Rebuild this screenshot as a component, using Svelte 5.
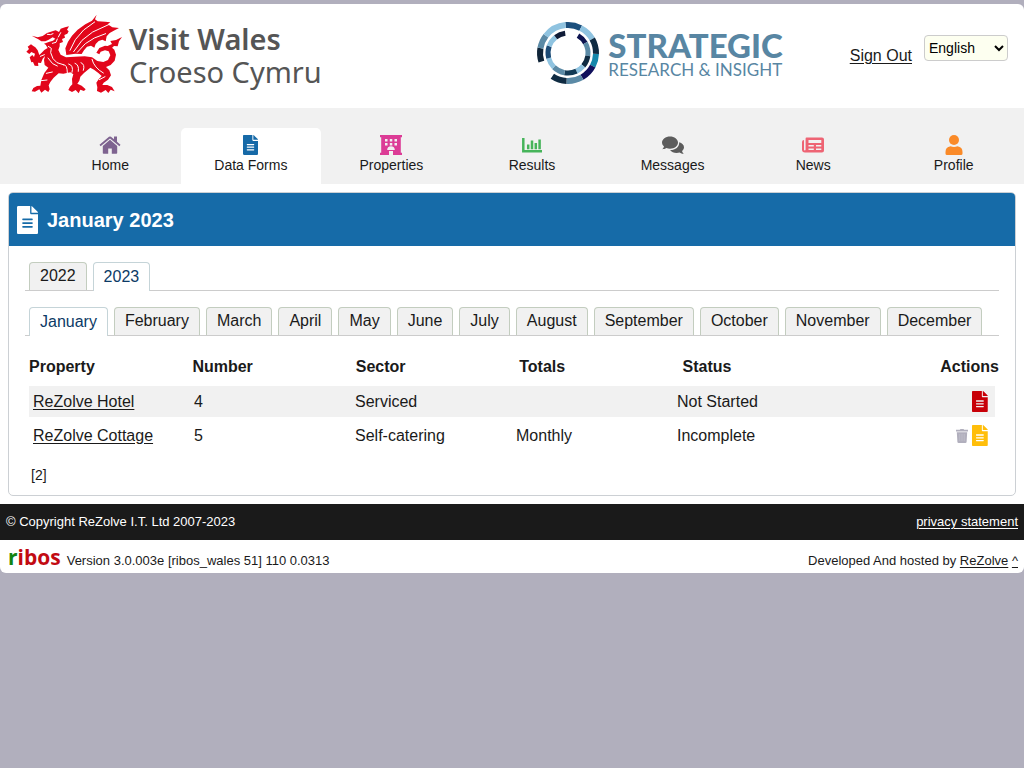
<script>
  const nav = [
    { id: 'home', label: 'Home', color: '#7e6390' },
    { id: 'forms', label: 'Data Forms', color: '#1669a7' },
    { id: 'properties', label: 'Properties', color: '#dc3c96' },
    { id: 'results', label: 'Results', color: '#46b45a' },
    { id: 'messages', label: 'Messages', color: '#5c5c5c' },
    { id: 'news', label: 'News', color: '#ee6474' },
    { id: 'profile', label: 'Profile', color: '#fa8a28' }
  ];
  const years = ['2022', '2023'];
  const months = ['January', 'February', 'March', 'April', 'May', 'June', 'July', 'August', 'September', 'October', 'November', 'December'];
  const rows = [
    { name: 'ReZolve Hotel', number: 4, sector: 'Serviced', totals: '', status: 'Not Started', color: '#c80008', removable: false },
    { name: 'ReZolve Cottage', number: 5, sector: 'Self-catering', totals: 'Monthly', status: 'Incomplete', color: '#ffbe0a', removable: true }
  ];

  let page = $state('forms');
  let year = $state('2023');
  let month = $state('January');

  const outer = ['#1b4f7d', '#8fc3e0', '#0f2b42', '#1587ab', '#10105c', '#5b8aa6', '#0f2b42', null, '#0f2438', '#5b8aa6', '#8fc3e0'];
  const outerAngles = [-5, 27, 60, 92, 118, 150, 183, 214, 252, 280, 308, 355];
  const inner = ['#0d1450', '#5b8aa6', '#0f2b42', '#8fc3e0', '#123a55', '#5b8aa6', '#8fc3e0', '#1b4a75', '#8fc3e0', '#0f1c38'];
  const innerAngles = [30, 60, 98, 130, 155, 190, 225, 255, 290, 322, 352];

  function arc(radius, from, to) {
    const point = (deg) => {
      const a = (deg * Math.PI) / 180;
      return `${(32 + radius * Math.sin(a)).toFixed(2)} ${(32 - radius * Math.cos(a)).toFixed(2)}`;
    };
    return `M${point(from)}A${radius} ${radius} 0 0 1 ${point(to)}`;
  }
</script>

{#snippet fileIcon()}
  <svg class="file" viewBox="0 0 384 512" aria-hidden="true">
    <path fill="currentColor" fill-rule="evenodd" d="M240 128V0H24C11 0 0 11 0 24v464c0 13 11 24 24 24h336c13 0 24-11 24-24V152H264c-13 0-24-11-24-24zm48 256c0 7-5 12-12 12H108c-7 0-12-5-12-12v-8c0-7 5-12 12-12h168c7 0 12 5 12 12zm0-68c0 7-5 12-12 12H108c-7 0-12-5-12-12v-8c0-7 5-12 12-12h168c7 0 12 5 12 12zm0-76v8c0 7-5 12-12 12H108c-7 0-12-5-12-12v-8c0-7 5-12 12-12h168c7 0 12 5 12 12zm96-118H264V0q8 0 15 7l98 98c4 5 7 11 7 17z" />
  </svg>
{/snippet}

<div class="sheet">
  <header class="masthead">
    <div class="brand">
      <svg class="dragon" viewBox="30 42 294 243" aria-hidden="true">
        <g fill="#e2061b">
          <path d="M50 107L68 112L83 108L96 99L112 94L122 91L132 96L137 86L150 82L162 79L156 89L161 94L157 101L148 105L150 113L141 117L144 126L134 130L134 139L130 150L137 164L153 172L180 170L209 169L231 172L247 183L265 186L279 180L286 166L281 154L270 151L257 155L253 163L244 158L253 144L270 137L286 139L298 149L303 164L299 182L287 195L273 201L283 211L288 226L279 239L266 248L262 255L277 255L291 261L299 274L287 269L280 279L272 270L258 278L246 273L247 262L244 248L251 238L260 228L250 219L237 209L226 203L207 219L196 230L193 242L187 251L200 257L212 268L207 273L196 269L191 280L182 270L171 276L160 270L165 260L172 253L171 237L175 223L166 217L145 221L131 220L116 233L106 246L101 256L104 268L100 276L90 269L79 278L73 268L60 275L50 274L55 264L66 258L76 257L79 240L88 219L100 203L89 195L87 180L90 168L83 176L78 189L69 188L70 198L59 197L54 186L49 187L44 172L52 165L57 171L60 161L49 156L43 162L34 155L42 147L38 140L48 133L55 138L61 142L68 151L73 165L80 158L88 150L98 144L92 134L87 131L101 126L114 122L121 116L113 112L101 119L91 124L79 124L70 118Z" />
          <path d="M154 165L151 145L159 125L171 107L188 89L211 73L231 62L245 44L240 58L248 64L271 65L286 67L278 73L292 82L312 84L299 91L284 99L275 109L272 124L262 119L251 123L242 132L238 143L228 137L216 140L207 151L200 162L181 161Z" />
          <path d="M276 139L291 132L286 123L303 120L321 111L312 124L308 139L297 138L290 145Z" />
        </g>
        <g fill="none" stroke="#fff" stroke-width="3" stroke-linecap="round">
          <path d="M165 151L181 119L206 90L239 66" />
          <path d="M176 155L201 121L233 96L283 73" />
          <path d="M187 157L211 131L238 114L272 101" />
          <path d="M100 139L109 145L107 158L114 176L126 188L145 194" />
          <path d="M112 130L123 127L127 117" />
          <path d="M99 174L113 191L127 198" />
          <path d="M145 194Q157 193 157 218M161 192Q177 196 171 217M180 190Q193 194 190 214M198 188Q211 193 205 211" />
          <path d="M231 178Q237 203 265 219M253 239L270 230M94 220L112 216M78 242L96 240" />
          <path d="M97 103L106 104L114 101M137 98L130 111M76 169L88 164" />
        </g>
      </svg>
      <div class="brand-text"><strong>Visit Wales</strong><span>Croeso Cymru</span></div>
    </div>

    <div class="partner">
      <svg class="rings" viewBox="0 0 64 64" aria-hidden="true">
        <g fill="none">
          {#each outer as color, i}
            {#if color}<path d={arc(28, outerAngles[i], outerAngles[i + 1])} stroke={color} stroke-width="6" />{/if}
          {/each}
          {#each inner as color, i}
            <path d={arc(20, innerAngles[i], innerAngles[i + 1])} stroke={color} stroke-width="5" />
          {/each}
        </g>
      </svg>
      <div class="partner-text"><strong>STRATEGIC</strong><span>RESEARCH &amp; INSIGHT</span></div>
    </div>

    <div class="account">
      <a href="#signout">Sign Out</a>
      <select aria-label="Language"><option>English</option><option>Cymraeg</option></select>
    </div>
  </header>

  <nav>
    {#each nav as item}
      <a href={'#' + item.id} class:active={page === item.id} onclick={() => (page = item.id)}>
        <span class="glyph" style:color={item.color}>
          {#if item.id === 'home'}
            <svg viewBox="0 0 22 20" aria-hidden="true" fill="currentColor"><path d="M11 4.8L3.8 10.9V18q0 .8.8.8h4.6v-5.3h3.6v5.3h4.6q.8 0 .8-.8v-7.1z" /><path d="M.5 9.8L10 1.800q1-.8 2 0l3 2.500V1.500h3v5.300l3.500 3-1.100 1.400L11 3.500 1.600 11.200z" /></svg>
          {:else if item.id === 'forms'}
            {@render fileIcon()}
          {:else if item.id === 'properties'}
            <svg viewBox="0 0 22 20" aria-hidden="true"><path fill="currentColor" fill-rule="evenodd" d="M0 0h22v2.2h-1.2v15.6H22V20h-9v-4H9v4H0v-2.200h1.200V2.200H0zM5 4v2.500h2.500V4zm4.800 0v2.500h2.500V4zm4.700 0v2.500H17V4zM5 8v2.500h2.500V8zm4.800 0v2.500h2.500V8zm4.700 0v2.500H17V8zM7.200 15h7.600a3.800 3.800 0 0 0-7.600 0z" /></svg>
          {:else if item.id === 'results'}
            <svg viewBox="0 0 20 20" aria-hidden="true"><path fill="none" stroke="currentColor" stroke-width="2.500" d="M1.300 3v13.200H20M6.200 9.500v4.800M10 5.500v8.800M13.800 8v6.300M17.600 4.500v9.800" /></svg>
          {:else if item.id === 'messages'}
            <svg viewBox="0 0 22 20" aria-hidden="true"><path fill="currentColor" d="M8 1.500c4.400 0 8 2.700 8 6.100s-3.600 6.200-8 6.200c-1.300 0-2.500-.2-3.600-.7-1.100.8-2.600 1.200-4.100 1.200.8-.8 1.400-1.800 1.700-2.900C.8 10.500 0 9.100 0 7.600c0-3.400 3.600-6.100 8-6.100z" /><path fill="currentColor" d="M17.200 7.300c2.800.8 4.800 2.700 4.800 5 0 1.400-.7 2.700-2 3.700.3 1.100.9 2.100 1.700 2.900-1.500 0-2.900-.5-4.100-1.300-3.500 1.200-7.800.1-9.500-2.500 5.300.1 9.300-3.100 9.100-7.800z" /></svg>
          {:else if item.id === 'news'}
            <svg viewBox="0 0 22 20" aria-hidden="true"><path fill="currentColor" fill-rule="evenodd" d="M4.500 2.500H20q2 0 2 2v11q0 2-2 2H3q-3 0-3-3V7q0-2 2-2v9.500q0 1 .8 1t.8-1v-11q0-1 .9-1zM6.500 5v3h12.800V5zm0 5v1.400h5.300V10zm7.500 0v1.400h5.300V10zm-7.500 3.500v1.400h5.300v-1.400zm7.500 0v1.400h5.300v-1.400z" /></svg>
          {:else}
            <svg viewBox="0 0 18 20" aria-hidden="true" fill="currentColor"><circle cx="9" cy="5" r="5" /><path d="M5.500 11.200q3.500 1.600 7 0Q17.500 12 17.500 17v1.500q0 1.500-1.500 1.500H2Q.5 20 .5 18.500V17q0-5 5-5.800z" /></svg>
          {/if}
        </span>
        {item.label}
      </a>
    {/each}
  </nav>

  <main class="panel">
    <h1>{@render fileIcon()}<span>{month} {year}</span></h1>
    <div class="content">
      <div class="tabs" role="tablist" aria-label="Year">
        {#each years as item}
          <button role="tab" aria-selected={year === item} onclick={() => (year = item)}>{item}</button>
        {/each}
      </div>
      <div class="tabs" role="tablist" aria-label="Month">
        {#each months as item}
          <button role="tab" aria-selected={month === item} onclick={() => (month = item)}>{item}</button>
        {/each}
      </div>

      <table>
        <thead>
          <tr><th>Property</th><th>Number</th><th>Sector</th><th>Totals</th><th>Status</th><th>Actions</th></tr>
        </thead>
        <tbody>
          {#each rows as row}
            <tr>
              <td><a href="#property">{row.name}</a></td>
              <td>{row.number}</td>
              <td>{row.sector}</td>
              <td>{row.totals}</td>
              <td>{row.status}</td>
              <td class="actions">
                {#if row.removable}
                  <button class="delete" aria-label="Delete form">
                    <svg viewBox="0 0 12 14" aria-hidden="true"><path fill="#b1afbd" d="M0 .8h3.800L4.500 0h3l.7.800H12v1.700H0zM.8 3.200h10.400l-.6 9.700q-.1 1.100-1.200 1.100H2.600q-1.100 0-1.200-1.100z" /><path stroke="#c3c1cd" stroke-width=".8" d="M3.800 5v7M6 5v7M8.200 5v7" /></svg>
                  </button>
                {/if}
                <button aria-label="Open form" style:color={row.color}>{@render fileIcon()}</button>
              </td>
            </tr>
          {/each}
        </tbody>
      </table>
      <p class="count">[{rows.length}]</p>
    </div>
  </main>

  <footer>
    <div class="legal"><span>© Copyright ReZolve I.T. Ltd 2007-2023</span><a href="#privacy">privacy statement</a></div>
    <div class="credits">
      <span class="ribos"><i>r</i>ibos</span>
      <span>Version 3.0.003e [ribos_wales 51] 110 0.0313</span>
      <span class="host">Developed And hosted by <a href="#rezolve">ReZolve</a> <a href="#top">^</a></span>
    </div>
  </footer>
</div>

<style>
  :global(body) {
    background: #b1afbd;
    color: #1a1a1a;
    font: 16px/20px "Liberation Sans", Arial, sans-serif;
  }
  .sheet {
    margin-top: 4px;
    background: #fff;
    border-radius: 6px;
    overflow: hidden;
  }
  a { color: inherit; text-underline-offset: 2px; }
  button { font: inherit; color: inherit; cursor: pointer; }
  svg { display: block; }
  .masthead {
    display: flex;
    min-height: 104px;
    padding: 0 16px 0 25px;
    box-sizing: border-box;
  }
  .brand { display: flex; gap: 6px; padding-top: 10px; }
  .dragon { width: 98px; height: 81px; }
  .brand-text {
    display: flex;
    flex-direction: column;
    padding-top: 8px;
    font: 29px/33px "Noto Sans", sans-serif;
    color: #555;
    white-space: nowrap;
  }
  .brand-text strong { font-weight: 600; }
  .partner { display: flex; gap: 8px; margin-left: auto; padding-top: 17px; }
  .rings { width: 64px; height: 64px; }
  .partner-text {
    display: flex;
    flex-direction: column;
    padding-top: 9px;
    font: 17px/20px Lato, sans-serif;
    color: #5886a3;
    white-space: nowrap;
  }
  .partner-text strong { font-size: 33px; line-height: 30px; font-weight: 900; }
  .account { display: flex; gap: 12px; margin-left: 67px; padding-top: 31px; }
  .account a { padding-top: 11px; white-space: nowrap; }
  select {
    width: 84px;
    height: 26px;
    padding: 0;
    border: 1px solid #ccc;
    border-radius: 4px;
    background-color: #fdfff0;
    color: #000;
    font: 14px "Liberation Sans", Arial, sans-serif;
  }
  nav {
    display: grid;
    grid-template-columns: repeat(7, 1fr);
    padding: 20px 0 0 40px;
    background: #f1f1f1;
  }
  nav a {
    display: flex;
    flex-direction: column;
    align-items: center;
    padding: 7px 0 9px;
    border-radius: 5px 5px 0 0;
    font-size: 14px;
    text-decoration: none;
  }
  nav a.active { background: #fff; }
  .glyph svg { height: 20px; }
  .panel {
    margin: 8px;
    border: 1px solid #ccd0d4;
    border-radius: 5px;
    overflow: hidden;
  }
  h1 {
    display: flex;
    align-items: center;
    gap: 9px;
    margin: 0;
    padding: 12px 8px;
    background: #166ba8;
    color: #fff;
    font-size: 20px;
    line-height: 29px;
  }
  h1 .file { height: 28px; }
  h1 span { padding-top: 1px; line-height: 28px; }
  .content { padding: 0 16px 10px; }
  .tabs {
    display: flex;
    gap: 6px;
    margin-top: 16px;
    padding-left: 4px;
    border-bottom: 1px solid #ccc;
  }
  .tabs button {
    height: 28px;
    padding: 0 10px 2px;
    border: 1px solid #c3cdbf;
    border-bottom: 0;
    border-radius: 4px 4px 0 0;
    background: #f1f1f1;
  }
  .tabs button[aria-selected='true'] {
    height: 29px;
    margin-bottom: -1px;
    padding-bottom: 0;
    border-color: #c5d4d8;
    background: #fff;
    color: #0c3a66;
  }
  table { display: block; padding: 21px 0 0 4px; }
  thead, tbody { display: block; }
  tr { display: grid; align-items: center; }
  thead tr { grid-template-columns: repeat(5, 1fr) 153px; padding-bottom: 9px; }
  th { padding: 0; text-align: left; }
  th:last-child { text-align: right; }
  tbody tr {
    grid-template-columns: repeat(6, 1fr);
    height: 31px;
    margin: 0 4px 3px 0;
  }
  tbody tr:nth-child(odd) { background: #f1f1f1; }
  td { padding: 0 4px; }
  .actions { display: flex; justify-content: flex-end; align-items: center; gap: 4px; padding-right: 7px; }
  .actions button { padding: 0; border: 0; background: none; }
  .actions .file { height: 21px; }
  .delete svg { width: 12px; height: 14px; }
  .count { margin: 14px 6px 0; font-size: 14px; }
  .legal {
    display: flex;
    justify-content: space-between;
    padding: 8px 6px;
    background: #1a1a1a;
    color: #fff;
    font-size: 13px;
  }
  .credits {
    display: flex;
    align-items: center;
    gap: 6px;
    min-height: 33px;
    padding: 0 6px 0 8px;
    font-size: 13px;
    line-height: 16px;
  }
  .credits > span:not(.ribos) { padding-top: 8px; }
  .ribos { padding-top: 2px; color: #c20a12; font: 700 21px/31px "Open Sans", sans-serif; }
  .ribos i { color: #128412; font-style: normal; }
  .host { margin-left: auto; }
</style>
